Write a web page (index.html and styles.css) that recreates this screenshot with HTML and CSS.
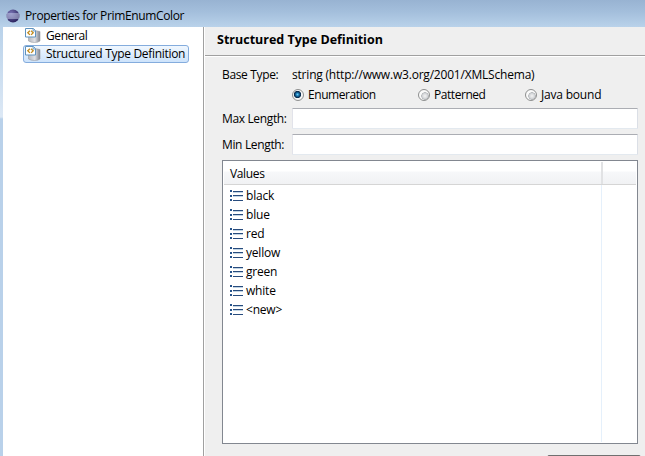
FILE: index.html
```
<!DOCTYPE html>
<html lang="en">
<head>
<meta charset="utf-8">
<title>Properties for PrimEnumColor</title>
<link rel="stylesheet" href="styles.css">
</head>
<body>
<svg class="defs" aria-hidden="true">
  <defs>
    <linearGradient id="cyl"><stop offset="0" stop-color="#b4b7bf"/><stop offset=".55" stop-color="#dfe0e5"/><stop offset="1" stop-color="#7f838d"/></linearGradient>
    <radialGradient id="ecl" cx=".35" cy=".3" r=".75"><stop offset="0" stop-color="#7974b4"/><stop offset="1" stop-color="#29215c"/></radialGradient>
    <symbol id="type" viewBox="0 0 16 16">
      <path d="M3.500 3.500q5-2 11.500 0V13q-2 1.500-5.500 1.500T3.500 13z" fill="url(#cyl)" stroke="#9a9da5" stroke-width=".6"/>
      <path d="M.5 .5h8l2 2v6.500H.5z" fill="#fff" stroke="#5f93bf"/>
      <path d="M8 .5v2.500h2.500" fill="#d4e5f3" stroke="#5f93bf" stroke-width=".8"/>
      <path d="M4.900 2.700 2.800 4.800l2.100 2.100M6.100 2.700l2.100 2.100-2.100 2.100" fill="none" stroke="#c08a1c" stroke-width="1.300"/>
    </symbol>
    <symbol id="list" viewBox="0 0 13 11">
      <path d="M0 0h2v2H0zM0 5h2v2H0zM0 9h2v2H0z" fill="#24528a"/>
      <path d="M3 1h10v1H3zM3 5h10v1H3zM3 10h10v1H3z" fill="#274b7d"/>
      <path d="M3 2h10v1H3zM3 6h10v1H3z" fill="#c1d5e5"/>
    </symbol>
  </defs>
</svg>
<div class="window">
  <header class="titlebar">
    <svg class="logo" viewBox="0 0 14 14"><circle cx="7" cy="7" r="6.500" fill="url(#ecl)"/><path d="M.8 5h12.400M.5 7h13M.8 9h12.400" stroke="#c9d0eb" stroke-width="1"/></svg>
    <span class="title">Properties for PrimEnumColor</span>
  </header>
  <div class="body">
    <nav class="tree">
      <div class="node"><svg class="type"><use href="#type"/></svg><span class="t-general">General</span></div>
      <div class="node selected"><svg class="type"><use href="#type"/></svg><span class="t-struct">Structured Type Definition</span></div>
    </nav>
    <main class="page">
      <h1>Structured Type Definition</h1>
      <div class="form">
        <div class="row base"><label>Base Type:</label><span class="t-base">string (http://www.w3.org/2001/XMLSchema)</span></div>
        <div class="row radios">
          <div class="radio r1 on"><i></i><span>Enumeration</span></div>
          <div class="radio r2"><i></i><span>Patterned</span></div>
          <div class="radio r3"><i></i><span>Java bound</span></div>
        </div>
        <div class="row field"><label>Max Length:</label><div class="input"></div></div>
        <div class="row field"><label>Min Length:</label><div class="input"></div></div>
        <div class="table">
          <div class="thead"><div class="th">Values</div></div>
          <div class="tbody">
            <div class="col">
              <div class="item"><svg class="list"><use href="#list"/></svg><span>black</span></div>
              <div class="item"><svg class="list"><use href="#list"/></svg><span>blue</span></div>
              <div class="item"><svg class="list"><use href="#list"/></svg><span>red</span></div>
              <div class="item"><svg class="list"><use href="#list"/></svg><span>yellow</span></div>
              <div class="item"><svg class="list"><use href="#list"/></svg><span>green</span></div>
              <div class="item"><svg class="list"><use href="#list"/></svg><span>white</span></div>
              <div class="item"><svg class="list"><use href="#list"/></svg><span>&lt;new&gt;</span></div>
            </div>
          </div>
        </div>
        <div class="button"></div>
      </div>
    </main>
  </div>
</div>
</body>
</html>
```
FILE: styles.css
```
* { box-sizing: border-box; }
body { margin: 0; font: 12px/16px "Open Sans", "Noto Sans", sans-serif; color: #000; letter-spacing: -.2px; overflow: hidden; white-space: nowrap; }
.defs { position: absolute; width: 0; height: 0; }
.window { width: 645px; height: 456px; display: flex; flex-direction: column; overflow: hidden; }
.titlebar { height: 27px; flex: none; display: flex; align-items: center; padding: 4px 0 0 6px; background: linear-gradient(#98b3d2, #a4bfdc 45%, #b9d2ea); }
.logo { width: 14px; height: 14px; margin-right: 5px; }
.title { letter-spacing: -.36px; }
.body { flex: 1; display: flex; min-height: 0; padding-left: 3px; background: linear-gradient(#b9d2ea, #dce8f5 88px, #dce8f5 90px, #b9d1ea 92px); }
.tree { flex: none; width: 201px; background: #fff; border-right: 1px solid #a0a0a0; padding-left: 20px; }
.node { width: 166px; height: 18px; display: flex; align-items: center; padding-left: 1px; border: 1px solid transparent; border-radius: 3px; }
.node.selected { border-color: #84acdd; background: linear-gradient(#f0f7fe, #cde3fb); }
.type { width: 16px; height: 16px; margin: 0 5px 0 0; }
.t-general { letter-spacing: -.4px; }
.t-struct { letter-spacing: -.31px; }
.page { flex: 1; min-width: 0; background: #efefef; border-left: 1px solid #fff; }
h1 { margin: 0; height: 30px; padding: 5px 0 0 12px; font-size: 12.5px; line-height: 16px; letter-spacing: 0; border-bottom: 1px solid #fff; box-shadow: inset 0 -1px #a0a0a0; }
.form { padding: 10px 7px 0 17px; }
.row { display: flex; align-items: center; }
.row label { width: 70px; flex: none; letter-spacing: -.35px; }
.base { height: 16px; }
.radios { height: 20px; margin: 2px 0 3px; padding-left: 70px; }
.radio { display: flex; align-items: center; }
.radio i { width: 12px; height: 12px; margin-right: 4px; border: 1px solid #8e8f8f; border-radius: 50%; background: radial-gradient(circle at 60% 60%, #f4f4f4 0, #d5d7da 2.5px, #b7babd 3.5px, #fafafa 4px); }
.radio.on i { background: radial-gradient(circle at 45% 45%, #6fd0f5 0, #1b79b3 1.5px, #0b2e50 3px, #0b2e50 3.3px, #f4f4f4 4px); }
.r1, .r2 { flex: none; letter-spacing: -.45px; }
.r1 { width: 126px; }
.r2 { width: 107px; }
.field { height: 21px; margin-bottom: 5px; }
.input { flex: 1; height: 21px; background: #fff; border: 1px solid; border-color: #abadb3 #dbdfe6 #e3e9ef #e2e3ea; border-radius: 1px; }
.table { height: 284px; background: #fff; border: 1px solid #828790; padding: 1px; display: flex; flex-direction: column; }
.thead { height: 23px; flex: none; background: linear-gradient(#fff 9px, #f7f8fa 10px, #f1f2f4); border-bottom: 1px solid #d5d5d5; }
.th { width: 379px; height: 22px; padding: 4px 0 0 6px; border-right: 2px solid #e1e2e4; letter-spacing: -.35px; }
.tbody { flex: 1; }
.col { width: 378px; height: 100%; padding: 2px 0 0 6px; border-right: 1px solid #e5f0fb; }
.item { height: 19px; display: flex; align-items: center; }
.item span { margin-top: -1px; }
.list { width: 13px; height: 11px; margin: -3px 3px 0 0; }
.button { width: 94px; height: 20px; margin: 11px 0 0 325px; border: 1px solid #707070; border-radius: 2px; background: #f2f2f2; }
```
